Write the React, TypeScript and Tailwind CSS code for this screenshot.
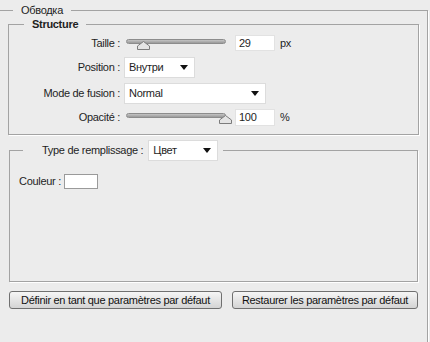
import React from 'react';

const Arrow = () => (
  <svg width="8" height="5" viewBox="0 0 8 5" className="shrink-0">
    <path d="M0 0 H8 L4 5 Z" fill="#111" />
  </svg>
);

const Dropdown = ({ value, width }: { value: string; width: string }) => (
  <div
    className={`${width} h-[21px] flex items-center justify-between bg-white border border-[#dcdcdc] pl-[4px] pr-[6px]`}
  >
    <span>{value}</span>
    <Arrow />
  </div>
);

const Slider = ({ pos }: { pos: number }) => (
  <div className="relative w-[104px] h-[20px]">
    <div className="absolute left-[2px] right-[2px] top-[6px] h-[5px] rounded-full border border-[#8c8c8c] bg-gradient-to-b from-[#c4c4c4] to-[#9a9a9a]" />
    <svg
      width="13"
      height="9"
      viewBox="0 0 13 9"
      className="absolute top-[8px]"
      style={{ left: pos }}
    >
      <path d="M6.5 0.5 L12.5 5 V8.5 H0.5 V5 Z" fill="#e4e4e4" stroke="#7c7c7c" />
    </svg>
  </div>
);

const NumberBox = ({ value, h }: { value: string; h: string }) => (
  <div className={`w-[40px] ${h} bg-white border border-[#e2e2e2] flex items-center pl-[3px]`}>
    {value}
  </div>
);

const Label = ({ children }: { children: React.ReactNode }) => (
  <div className="w-[111px] text-right shrink-0">{children}</div>
);

export default function App() {
  return (
    <div
      className="w-[430px] h-[342px] overflow-hidden bg-[#ececec] text-[11px] leading-[13px] tracking-[-0.3px] text-[#1e1e1e]"
      style={{ fontFamily: '"Liberation Sans", Arial, sans-serif' }}
    >
      <fieldset className="ml-[-2px] mt-[4px] w-[430px] min-h-[400px] border border-[#a3a3a3] shadow-[1px_1px_0_#fff] pl-[9px] pr-[8px] pt-[1px]">
        <legend className="ml-[5px] px-[8px]">Обводка</legend>

        <fieldset className="w-full border border-[#a3a3a3] shadow-[1px_1px_0_#fff] pt-[2px] pb-[7px]">
          <legend className="ml-[15px] px-[8px] font-bold">Structure</legend>

          <div className="flex items-center h-[20px] gap-[4px]">
            <Label>Taille :</Label>
            <Slider pos={13} />
            <div className="ml-[3px]">
              <NumberBox value="29" h="h-[16px]" />
            </div>
            <span className="ml-[1px]">px</span>
          </div>

          <div className="flex items-center h-[23px] mt-[3px] gap-[4px]">
            <Label>Position :</Label>
            <Dropdown value="Внутри" width="w-[71px]" />
          </div>

          <div className="flex items-center h-[21px] mt-[4px] gap-[4px]">
            <Label>Mode de fusion :</Label>
            <Dropdown value="Normal" width="w-[142px]" />
          </div>

          <div className="flex items-center h-[20px] mt-[3px] gap-[4px]">
            <Label>Opacité :</Label>
            <Slider pos={95} />
            <div className="ml-[3px]">
              <NumberBox value="100" h="h-[17px]" />
            </div>
            <span className="ml-[1px]">%</span>
          </div>
        </fieldset>

        <fieldset className="ml-[1px] mt-[5px] w-[409px] h-[142px] border border-[#a3a3a3] shadow-[1px_1px_0_#fff] pl-[9px] pt-[13px]">
          <legend className="ml-[4px] pl-[19px] pr-[5px]">
            <div className="flex items-center gap-[5px]">
              <span>Type de remplissage :</span>
              <Dropdown value="Цвет" width="w-[70px]" />
            </div>
          </legend>
          <div className="flex items-center gap-[3px]">
            <span>Couleur :</span>
            <div className="w-[34px] h-[15px] bg-white border border-[#9a9a9a]" />
          </div>
        </fieldset>

        <div className="flex mt-[9px] ml-[1px] gap-[10px]">
          <button className="w-[213px] h-[18px] rounded-[3px] border border-[#707070] bg-gradient-to-b from-[#f6f6f6] to-[#d4d4d4] text-[#111]">
            Définir en tant que paramètres par défaut
          </button>
          <button className="w-[186px] h-[18px] rounded-[3px] border border-[#707070] bg-gradient-to-b from-[#f6f6f6] to-[#d4d4d4] text-[#111]">
            Restaurer les paramètres par défaut
          </button>
        </div>
      </fieldset>
    </div>
  );
}
